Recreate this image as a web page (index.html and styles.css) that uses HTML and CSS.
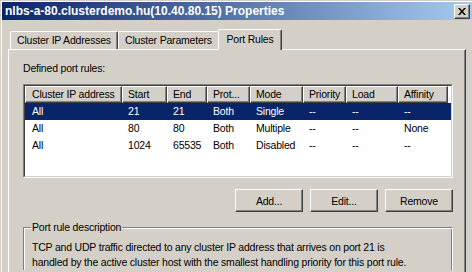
FILE: index.html
```html
<!DOCTYPE html>
<html lang="en">
<head>
    <meta charset="UTF-8">
    <title>nlbs-a-80.clusterdemo.hu(10.40.80.15) Properties</title>
    <link rel="stylesheet" href="styles.css">
</head>
<body>
    <div class="window">
        <div class="window-inner">
            <div class="titlebar">
                <span class="title">nlbs-a-80.clusterdemo.hu(10.40.80.15) Properties</span>
                <button class="close-btn" type="button">
                    <svg width="8" height="7" viewBox="0 0 8 7">
                        <path d="M0 0h2l2 2.5L6 0h2L5 3.5 8 7H6L4 4.5 2 7H0l3-3.5z" fill="#000"/>
                    </svg>
                </button>
            </div>

            <div class="dialog">
                <div class="tabs">
                    <div class="tab tab-ip">Cluster IP Addresses</div>
                    <div class="tab tab-params">Cluster Parameters</div>
                    <div class="tab tab-rules active">Port Rules</div>
                </div>

                <div class="tab-panel">
                    <div class="field-label">Defined port rules:</div>

                    <div class="listview">
                        <div class="lv-body">
                            <div class="lv-row lv-header">
                                <div>Cluster IP address</div>
                                <div>Start</div>
                                <div>End</div>
                                <div>Prot...</div>
                                <div>Mode</div>
                                <div>Priority</div>
                                <div>Load</div>
                                <div>Affinity</div>
                            </div>
                            <div class="lv-row selected">
                                <div>All</div><div>21</div><div>21</div><div>Both</div>
                                <div>Single</div><div>--</div><div>--</div><div>--</div>
                            </div>
                            <div class="lv-row">
                                <div>All</div><div>80</div><div>80</div><div>Both</div>
                                <div>Multiple</div><div>--</div><div>--</div><div>None</div>
                            </div>
                            <div class="lv-row">
                                <div>All</div><div>1024</div><div>65535</div><div>Both</div>
                                <div>Disabled</div><div>--</div><div>--</div><div>--</div>
                            </div>
                        </div>
                    </div>

                    <div class="buttons">
                        <button type="button">Add...</button>
                        <button type="button">Edit...</button>
                        <button type="button">Remove</button>
                    </div>

                    <fieldset class="groupbox">
                        <legend>Port rule description</legend>
                        <p class="description">TCP and UDP traffic directed to any cluster IP address that arrives on port 21 is<br>handled by the active cluster host with the smallest handling priority for this port rule.</p>
                    </fieldset>
                </div>
            </div>
        </div>
    </div>
</body>
</html>
```

FILE: styles.css
```css
body {
    margin: 0;
    width: 472px;
    height: 272px;
    overflow: hidden;
    background-color: #d4d0c8;
    font-family: "Liberation Sans", Arial, sans-serif;
    font-size: 10.5px;
    letter-spacing: -0.2px;
    color: #000;
}
.window {
    height: 272px;
    box-sizing: border-box;
    border-top: 1px solid #d4d0c8;
    border-left: 1px solid #d4d0c8;
}
.window-inner {
    height: 100%;
    box-sizing: border-box;
    display: flex;
    flex-direction: column;
    border-top: 1px solid #fff;
    border-left: 1px solid #fff;
}
.titlebar {
    height: 18px;
    flex-shrink: 0;
    display: flex;
    align-items: center;
    justify-content: space-between;
    padding-left: 3px;
    background: linear-gradient(to right, #0a246a, #a6caf0);
    color: #fff;
    font-weight: bold;
    font-size: 12px;
    letter-spacing: 0;
}
.close-btn {
    width: 16px;
    height: 15px;
    margin-right: 2px;
    padding: 0;
    display: flex;
    align-items: center;
    justify-content: center;
    background-color: #d4d0c8;
    border: 1px solid;
    border-color: #fff #404040 #404040 #fff;
    box-shadow: inset -1px -1px #808080;
}
.dialog {
    flex: 1;
    min-height: 0;
    display: flex;
    flex-direction: column;
    padding: 9px 6px 0 6px;
}
.tabs {
    display: flex;
    align-items: flex-end;
    padding-left: 2px;
}
.tab {
    box-sizing: border-box;
    height: 18px;
    line-height: 16px;
    text-align: center;
    border-top: 1px solid #fff;
    border-left: 1px solid #fff;
    border-right: 1px solid #404040;
    box-shadow: inset -1px 0 #808080;
    border-radius: 2px 2px 0 0;
}
.tab-ip {
    width: 108px;
}
.tab-params {
    width: 100px;
    border-right: none;
    box-shadow: none;
}
.tab.active {
    width: 64px;
    height: 21px;
    line-height: 19px;
    margin-bottom: -1px;
    position: relative;
    background-color: #d4d0c8;
}
.tab-panel {
    flex: 1;
    min-height: 0;
    overflow: hidden;
    padding: 12px 12px 0 14px;
    border: 1px solid;
    border-bottom: none;
    border-color: #fff #404040 #404040 #fff;
    box-shadow: inset -1px 0 #808080;
}
.field-label {
    line-height: 13px;
    margin-bottom: 9px;
}
.listview {
    height: 94px;
    box-sizing: border-box;
    border: 1px solid;
    border-color: #808080 #fff #fff #808080;
}
.lv-body {
    height: 100%;
    box-sizing: border-box;
    border: 1px solid;
    border-color: #404040 #d4d0c8 #d4d0c8 #404040;
    background-color: #fff;
}
.lv-row {
    display: grid;
    grid-template-columns: 97px 45px 40px 43px 53px 43px 52px 50px;
    height: 17px;
    line-height: 17px;
}
.lv-row > div {
    padding-left: 6px;
    white-space: nowrap;
    overflow: hidden;
}
.lv-row > div:first-child {
    padding-left: 7px;
}
.lv-header > div {
    box-sizing: border-box;
    height: 17px;
    line-height: 15px;
    padding-left: 5px;
    background-color: #d4d0c8;
    border: 1px solid;
    border-color: #fff #404040 #404040 #fff;
    box-shadow: inset -1px -1px #808080;
}
.lv-header > div:first-child {
    padding-left: 6px;
}
.lv-row.selected {
    background-color: #0a246a;
    color: #fff;
}
.buttons {
    display: flex;
    justify-content: flex-end;
    gap: 7px;
    margin-top: 11px;
}
.buttons button {
    width: 68px;
    height: 23px;
    padding: 0;
    font-family: inherit;
    font-size: inherit;
    letter-spacing: inherit;
    color: #000;
    background-color: #d4d0c8;
    border: 1px solid;
    border-color: #fff #404040 #404040 #fff;
    box-shadow: inset -1px -1px #808080;
}
.groupbox {
    margin: 9px 0 0 0;
    padding: 0 8px 0 7px;
    border: 1px solid;
    border-bottom: none;
    border-color: #808080 #fff #fff #808080;
    box-shadow: inset 1px 1px #fff, inset -1px 0 #808080;
}
.groupbox legend {
    padding: 0 1px;
    line-height: 13px;
    background-color: #d4d0c8;
}
.description {
    margin: 6px 0 0 1px;
    line-height: 15px;
}
```
